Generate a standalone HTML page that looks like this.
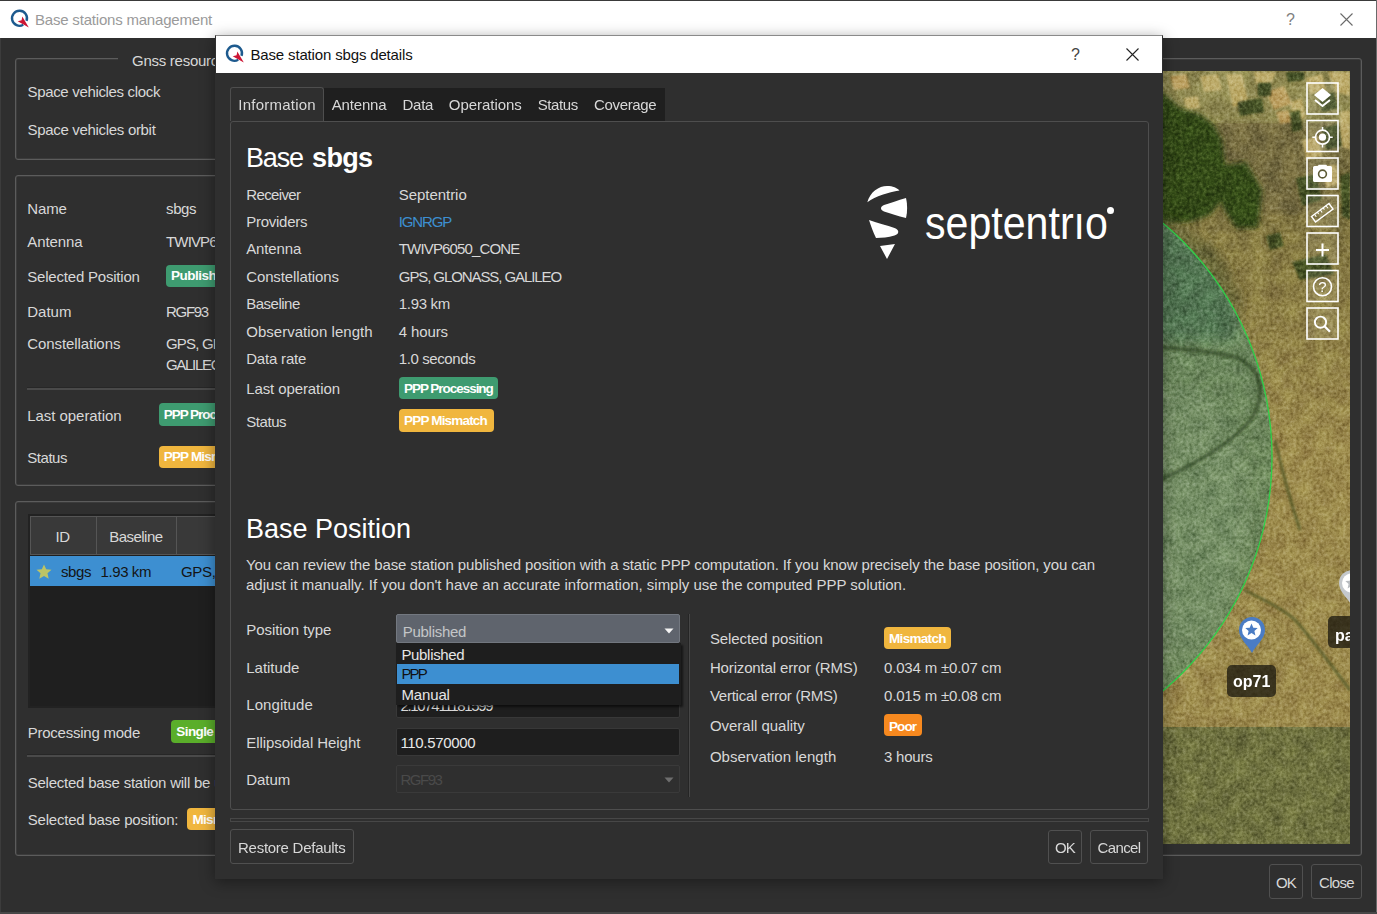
<!DOCTYPE html><html><head><meta charset="utf-8"><style>
*{box-sizing:border-box;margin:0;padding:0}
html,body{width:1377px;height:914px;overflow:hidden;background:#2f2f2f;font-family:"Liberation Sans",sans-serif;font-size:15px;color:#d8d8d8}
.a{position:absolute}
.t{position:absolute;white-space:nowrap}
.bd{position:absolute;border-radius:4px}
.gb{position:absolute;border:1px solid #5c5c5c;border-radius:3px;box-shadow:inset 0 0 0 0.5px rgba(90,90,90,0.6)}
.btn{position:absolute;border:1px solid #505050;border-radius:3px;background:#2f2f2f}
</style></head><body><div class="a" style="left:0px;top:0px;width:1377px;height:1px;background:#3a3a3a"></div><div class="a" style="left:0px;top:1px;width:1376px;height:37px;background:#fff"></div><div class="a" style="left:1376px;top:0px;width:1px;height:914px;background:#6a6a6a"></div><div class="a" style="left:0px;top:38px;width:1px;height:876px;background:#3c3c3c"></div><div class="a" style="left:0px;top:912px;width:1377px;height:2px;background:#474747"></div><svg class="a" style="left:10px;top:9px" width="22" height="22" viewBox="0 0 22 22"><path d="M13.25,15.8 A7.5,7.5 0 1 1 16.55,11.87" fill="none" stroke="#1d5a8e" stroke-width="2.4"/><path d="M18.8,18.6 L7.7,12.3 L11.6,11.3 L12.3,7.5 Z" fill="#cc1533"/></svg><div class="t" style="left:35px;top:12.3px;font-size:15px;line-height:15px;color:#9a9a9a;letter-spacing:-0.199px;">Base stations management</div><div class="t" style="left:1286px;top:11.5px;font-size:16px;line-height:16px;color:#808080;letter-spacing:-0.312px;">?</div><svg class="a" style="left:1340px;top:13px" width="13" height="13" viewBox="0 0 13 13"><path d="M0.5,0.5 L12.5,12.5 M12.5,0.5 L0.5,12.5" stroke="#6a6a6a" stroke-width="1.1"/></svg><div class="gb" style="left:15px;top:58px;width:400px;height:102px"></div><div class="a" style="left:118px;top:52px;width:280px;height:12px;background:#2f2f2f"></div><div class="t" style="left:132px;top:53.3px;font-size:15px;line-height:15px;letter-spacing:-0.263px;">Gnss resources</div><div class="t" style="left:27.5px;top:84.3px;font-size:15px;line-height:15px;letter-spacing:-0.332px;">Space vehicles clock</div><div class="t" style="left:27.5px;top:121.8px;font-size:15px;line-height:15px;letter-spacing:-0.312px;">Space vehicles orbit</div><div class="gb" style="left:15px;top:175px;width:400px;height:311px"></div><div class="t" style="left:27.3px;top:201.1px;font-size:15px;line-height:15px;letter-spacing:-0.154px;">Name</div><div class="t" style="left:166px;top:201.1px;font-size:15px;line-height:15px;letter-spacing:-0.372px;">sbgs</div><div class="t" style="left:27.3px;top:234.4px;font-size:15px;line-height:15px;letter-spacing:-0.099px;">Antenna</div><div class="t" style="left:166px;top:234.4px;font-size:15px;line-height:15px;letter-spacing:-0.846px;">TWIVP6050_CONE</div><div class="t" style="left:27.3px;top:269.3px;font-size:15px;line-height:15px;letter-spacing:-0.206px;">Selected Position</div><div class="bd" style="left:166px;top:264.6px;width:70px;height:22.2px;background:#3e9b70"></div><div class="t" style="left:171px;top:269.1px;font-size:13.5px;line-height:13.5px;color:#fff;font-weight:bold;letter-spacing:-0.502px;">Published</div><div class="t" style="left:27.3px;top:304.3px;font-size:15px;line-height:15px;letter-spacing:-0.017px;">Datum</div><div class="t" style="left:166px;top:304.3px;font-size:15px;line-height:15px;letter-spacing:-1.292px;">RGF93</div><div class="t" style="left:27.3px;top:336.0px;font-size:15px;line-height:15px;letter-spacing:-0.087px;">Constellations</div><div class="t" style="left:166px;top:336.0px;font-size:15px;line-height:15px;letter-spacing:-0.825px;">GPS, GLONASS,</div><div class="t" style="left:166px;top:356.7px;font-size:15px;line-height:15px;letter-spacing:-1.315px;">GALILEO</div><div class="a" style="left:27px;top:386.5px;width:390px;height:1px;background:#272727"></div><div class="a" style="left:27px;top:387.5px;width:390px;height:2px;background:#4a4a4a"></div><div class="t" style="left:27.3px;top:407.5px;font-size:15px;line-height:15px;letter-spacing:-0.056px;">Last operation</div><div class="bd" style="left:158.7px;top:403.3px;width:99px;height:22.3px;background:#3e9b70"></div><div class="t" style="left:163.7px;top:407.9px;font-size:13.5px;line-height:13.5px;color:#fff;font-weight:bold;letter-spacing:-1.022px;">PPP Processing</div><div class="t" style="left:27.3px;top:450.3px;font-size:15px;line-height:15px;letter-spacing:-0.472px;">Status</div><div class="bd" style="left:158.7px;top:445.6px;width:95px;height:22.5px;background:#f0b63e"></div><div class="t" style="left:163.7px;top:450.3px;font-size:13.5px;line-height:13.5px;color:#fff;font-weight:bold;letter-spacing:-0.816px;">PPP Mismatch</div><div class="gb" style="left:15px;top:501px;width:400px;height:355px"></div><div class="a" style="left:27.5px;top:513.5px;width:392px;height:194px;background:#1f1f1f;border:2px solid #222"></div><div class="a" style="left:29.5px;top:515.5px;width:388px;height:39.5px;background:#393939;border:1px solid #555"></div><div class="a" style="left:95.5px;top:516.3px;width:1px;height:38.5px;background:#555"></div><div class="a" style="left:176.3px;top:516.3px;width:1px;height:38.5px;background:#555"></div><div class="t" style="left:55.6px;top:529.4px;font-size:15px;line-height:15px;letter-spacing:-0.400px;">ID</div><div class="t" style="left:109.3px;top:529.4px;font-size:15px;line-height:15px;letter-spacing:-0.543px;">Baseline</div><div class="a" style="left:29.5px;top:556px;width:388px;height:30px;background:#3d8fd1"></div><svg class="a" style="left:35.5px;top:563.5px" width="16" height="16" viewBox="0 0 16 16"><path d="M8,0.5 L10.2,5.3 L15.5,5.8 L11.5,9.3 L12.7,14.8 L8,12 L3.3,14.8 L4.5,9.3 L0.5,5.8 L5.8,5.3 Z" fill="#bcc466"/></svg><div class="t" style="left:61px;top:563.9px;font-size:15px;line-height:15px;color:#141414;letter-spacing:-0.422px;">sbgs</div><div class="t" style="left:100.5px;top:563.9px;font-size:15px;line-height:15px;color:#141414;letter-spacing:-0.408px;">1.93 km</div><div class="t" style="left:181px;top:563.9px;font-size:15px;line-height:15px;color:#141414;letter-spacing:-0.328px;">GPS, GLONASS</div><div class="t" style="left:27.7px;top:724.8px;font-size:15px;line-height:15px;letter-spacing:-0.240px;">Processing mode</div><div class="bd" style="left:171.3px;top:719.5px;width:60px;height:23.8px;background:#5aae2a"></div><div class="t" style="left:176.3px;top:724.8px;font-size:13.5px;line-height:13.5px;color:#fff;font-weight:bold;letter-spacing:-0.586px;">Single</div><div class="a" style="left:27px;top:754px;width:390px;height:1px;background:#272727"></div><div class="a" style="left:27px;top:755px;width:390px;height:2px;background:#4a4a4a"></div><div class="t" style="left:27.7px;top:774.7px;font-size:15px;line-height:15px;letter-spacing:-0.233px;">Selected base station will be used</div><div class="t" style="left:27.7px;top:812.2px;font-size:15px;line-height:15px;letter-spacing:-0.196px;">Selected base position:</div><div class="bd" style="left:187.4px;top:808.4px;width:66px;height:21.9px;background:#f0b63e"></div><div class="t" style="left:192.4px;top:812.8px;font-size:13.5px;line-height:13.5px;color:#fff;font-weight:bold;letter-spacing:-0.660px;">Mismatch</div><div class="gb" style="left:1000px;top:58px;width:362px;height:798px"></div><svg class="a" style="left:1000px;top:71px;isolation:isolate" width="350" height="773" viewBox="1000 71 350 773"><defs><filter id="b6" x="-50%" y="-50%" width="200%" height="200%"><feGaussianBlur stdDeviation="6"/></filter><filter id="b3" x="-50%" y="-50%" width="200%" height="200%"><feGaussianBlur stdDeviation="2.5"/></filter><filter id="b1" x="-50%" y="-50%" width="200%" height="200%"><feGaussianBlur stdDeviation="0.9"/></filter><filter id="tx" x="0" y="0" width="1" height="1" color-interpolation-filters="sRGB"><feTurbulence type="fractalNoise" baseFrequency="0.3" numOctaves="4" seed="4"/><feColorMatrix type="matrix" values="1.3 0 0 0 -0.15  1.3 0 0 0 -0.15  1.3 0 0 0 -0.15  0 0 0 0 1"/></filter><filter id="tx2" x="0" y="0" width="1" height="1" color-interpolation-filters="sRGB"><feTurbulence type="fractalNoise" baseFrequency="0.06" numOctaves="2" seed="9"/><feColorMatrix type="matrix" values="1.5 0 0 0 -0.25  1.5 0 0 0 -0.25  1.5 0 0 0 -0.25  0 0 0 0 1"/></filter><linearGradient id="gv" x1="0" y1="0" x2="0" y2="1"><stop offset="0" stop-color="#8c8650"/><stop offset="0.12" stop-color="#807846"/><stop offset="0.25" stop-color="#766c3e"/><stop offset="0.45" stop-color="#867a42"/><stop offset="1" stop-color="#9c8a4c"/></linearGradient></defs><rect x="1000" y="71" width="350" height="380" fill="url(#gv)"/><rect x="1000" y="440" width="350" height="287" fill="#9c8a4c"/><rect x="1000" y="727" width="350" height="117" fill="#6f723f"/><rect x="1000" y="71" width="350" height="52" fill="#8e8850"/><rect x="1222" y="122" width="80" height="90" fill="#766c40" filter="url(#b3)"/><g filter="url(#b1)" fill="#ccb874" opacity="0.8"><path d="M1226,74 L1242,74 L1248,100 L1233,108 Z"/><path d="M1254,72 L1276,72 L1272,82 L1256,84 Z"/><path d="M1290,102 L1302,98 L1306,118 L1294,121 Z"/><path d="M1328,72 L1350,72 L1350,96 L1336,92 Z"/><path d="M1340,112 L1350,110 L1350,150 L1340,146 Z"/><path d="M1302,140 L1318,136 L1322,156 L1306,160 Z"/><path d="M1184,98 L1198,96 L1200,108 L1186,110 Z"/><path d="M1200,76 L1218,74 L1222,90 L1204,92 Z"/><path d="M1306,78 L1322,74 L1326,90 L1310,94 Z"/><path d="M1322,168 L1336,164 L1340,184 L1326,188 Z"/></g><g filter="url(#b1)" fill="#bca060"><path d="M1266,92 L1284,86 L1292,104 L1274,110 Z"/><path d="M1276,112 L1288,110 L1294,122 L1280,124 Z"/><path d="M1170,76 L1186,74 L1190,88 L1174,90 Z"/></g><g filter="url(#b1)" fill="#e2dab6" opacity="0.9"><path d="M1182,157 L1198,156 L1199,163 L1184,164 Z"/></g><g filter="url(#b3)" fill="#304816"><path d="M1000,92 L1162,92 L1180,108 L1200,114 L1214,125 L1222,140 L1226,170 L1222,200 L1210,215 L1190,222 L1166,224 L1000,240 Z"/><path d="M1220,166 L1246,162 L1262,190 L1258,228 L1236,228 L1222,206 Z"/></g><g filter="url(#b1)" fill="#36461a" opacity="0.8"><path d="M1258,83 L1271,83 L1271,96 L1258,96 Z"/><path d="M1238,102 L1262,98 L1264,112 L1240,116 Z"/><path d="M1290,112 L1300,110 L1302,130 L1292,132 Z"/><path d="M1318,96 L1334,92 L1338,108 L1322,112 Z"/><path d="M1286,72 L1304,72 L1304,80 L1288,82 Z"/><path d="M1322,128 L1338,124 L1342,146 L1326,150 Z"/><path d="M1296,178 L1316,174 L1322,200 L1302,206 Z"/><path d="M1340,176 L1350,172 L1350,220 L1342,216 Z"/><path d="M1292,262 L1326,254 L1334,274 L1300,280 Z"/><path d="M1266,236 L1280,232 L1284,246 L1270,250 Z"/></g><g filter="url(#b6)"><path d="M1000,230 L1170,222 L1215,250 L1240,300 L1235,340 L1000,345 Z" fill="#5e6034" opacity="0.8"/><path d="M1000,400 L1200,390 L1240,430 L1250,520 L1220,640 L1000,700 Z" fill="#b4a070" opacity="0.35"/></g><g filter="url(#b3)"><path d="M1000,780 L1040,770 L1050,800 L1010,810 Z" fill="#a8a070" opacity="0.5"/></g><circle cx="967" cy="457" r="305" fill="#3a8a74" fill-opacity="0.45"/><rect x="1000" y="71" width="350" height="773" filter="url(#tx2)" style="mix-blend-mode:overlay" opacity="0.15"/><rect x="1000" y="71" width="350" height="773" filter="url(#tx)" style="mix-blend-mode:soft-light" opacity="0.55"/><g fill="none" stroke="#4a5224" stroke-width="3" opacity="0.7" filter="url(#b1)"><path d="M1244,590 C1265,600 1285,610 1295,620 C1305,630 1320,650 1350,690"/><path d="M1275,440 C1282,470 1290,500 1300,530"/><path d="M1000,342 C1100,344 1200,346 1238,358 C1262,370 1266,394 1252,418 C1232,444 1195,464 1160,480 L1000,560" stroke="#2a3e1c" stroke-width="4" opacity="0.85"/></g><circle cx="967" cy="457" r="305" fill="none" stroke="#2fd04a" stroke-width="1.3"/><rect x="1307" y="83" width="31" height="31" fill="rgba(255,255,255,0.08)" stroke="#fff" stroke-width="1.6"/><rect x="1307" y="120.5" width="31" height="31" fill="rgba(255,255,255,0.08)" stroke="#fff" stroke-width="1.6"/><rect x="1307" y="158" width="31" height="31" fill="rgba(255,255,255,0.08)" stroke="#fff" stroke-width="1.6"/><rect x="1307" y="195.5" width="31" height="31" fill="rgba(255,255,255,0.08)" stroke="#fff" stroke-width="1.6"/><rect x="1307" y="233" width="31" height="31" fill="rgba(255,255,255,0.08)" stroke="#fff" stroke-width="1.6"/><rect x="1307" y="270.5" width="31" height="31" fill="rgba(255,255,255,0.08)" stroke="#fff" stroke-width="1.6"/><rect x="1307" y="308" width="31" height="31" fill="rgba(255,255,255,0.08)" stroke="#fff" stroke-width="1.6"/></svg><svg class="a" style="left:1300px;top:75px" width="50" height="280" viewBox="1300 75 50 280"><g fill="#fff" stroke="#fff"><path d="M1322.5,88 L1331,95 L1322.5,102 L1314,95 Z" stroke="none"/><path d="M1315,100 L1322.5,106 L1330,100" fill="none" stroke-width="2"/><circle cx="1322.5" cy="137.2" r="7" fill="none" stroke-width="1.7"/><circle cx="1322.5" cy="137.2" r="3.6" stroke="none"/><path d="M1322.5,127 V130.5 M1322.5,144 V147.5 M1312.3,137.2 H1315.8 M1329.2,137.2 H1332.7" stroke-width="1.6"/><path d="M1313,167.5 Q1313,166 1314.5,166 H1317.5 L1319,164.8 H1326 L1327.5,166 H1330.5 Q1332,166 1332,167.5 V180.5 Q1332,182 1330.5,182 H1314.5 Q1313,182 1313,180.5 Z" stroke="none"/><circle cx="1322.5" cy="174" r="3.9" fill="none" stroke="#5c5a36" stroke-width="1.6"/><path d="M1311.5,216.5 L1329,203.5 L1333,209 L1315.5,222 Z" fill="none" stroke-width="1.5"/><path d="M1314.5,214.3 L1316.3,216.8 M1317.4,212.2 L1318.6,213.9 M1320.3,210 L1322.1,212.5 M1323.2,207.9 L1324.4,209.6 M1326.1,205.7 L1327.9,208.2" stroke-width="1.1"/><path d="M1322.5,243.5 V256.5 M1316,250 H1329" stroke-width="2"/><circle cx="1322.5" cy="286.8" r="9" fill="none" stroke-width="1.6"/><text x="1322.5" y="292.3" font-size="15" text-anchor="middle" stroke="none" font-family="Liberation Sans">?</text><circle cx="1320.5" cy="322.2" r="5.6" fill="none" stroke-width="1.9"/><path d="M1324.5,326.2 L1330,331.7" stroke-width="2.3"/></g></svg><svg class="a" style="left:1236px;top:614px" width="32" height="42" viewBox="0 0 32 42"><path d="M16,39 C12,31 3,25 3,16 A13,13 0 0 1 29,16 C29,25 20,31 16,39 Z" fill="#4a7cc4"/><circle cx="15.5" cy="16" r="9.5" fill="#fff"/><path d="M15.5,9.5 L17.3,13.7 L21.7,14 L18.4,17 L19.4,21.5 L15.5,19 L11.6,21.5 L12.6,17 L9.3,14 L13.7,13.7 Z" fill="#4a7cc4"/></svg><div class="a" style="left:1227px;top:665px;width:49px;height:32px;background:rgba(24,22,14,0.74);border-radius:5px"></div><div class="t" style="left:1233px;top:674px;font-size:16px;line-height:16px;font-weight:bold;color:#fff">op71</div><div class="a" style="left:1000px;top:560px;width:350px;height:100px;overflow:hidden"><svg class="a" style="left:336px;top:7px" width="32" height="42" viewBox="0 0 32 42"><path d="M16,39 C12,31 3,25 3,16 A13,13 0 0 1 29,16 C29,25 20,31 16,39 Z" fill="#c4c8cc"/><circle cx="15.5" cy="16" r="9.5" fill="#fff"/><path d="M15.5,9.5 L17.3,13.7 L21.7,14 L18.4,17 L19.4,21.5 L15.5,19 L11.6,21.5 L12.6,17 L9.3,14 L13.7,13.7 Z" fill="#b8bcc0"/></svg><div class="a" style="left:328px;top:56px;width:40px;height:32px;background:rgba(24,22,14,0.74);border-radius:5px"></div><div class="t" style="left:335px;top:68px;font-size:16px;line-height:16px;font-weight:bold;color:#fff">pa</div></div><div class="btn" style="left:1268.5px;top:864.3px;width:34.5px;height:34.5px"></div><div class="t" style="left:1276px;top:875.3px;font-size:15px;line-height:15px;letter-spacing:-0.844px;">OK</div><div class="btn" style="left:1311px;top:864.3px;width:51px;height:34.5px"></div><div class="t" style="left:1319px;top:875.3px;font-size:15px;line-height:15px;letter-spacing:-0.672px;">Close</div><div class="a" style="left:215px;top:35px;width:948px;height:844px;background:#2f2f2f;border:1px solid #2f2f2f;border-top-color:#8a8a8a;box-shadow:0 3px 14px rgba(0,0,0,0.4)"></div><div class="a" style="left:216px;top:36px;width:946px;height:37px;background:#fff"></div><svg class="a" style="left:225px;top:44.2px" width="22" height="22" viewBox="0 0 22 22"><path d="M13.25,15.8 A7.5,7.5 0 1 1 16.55,11.87" fill="none" stroke="#1d5a8e" stroke-width="2.4"/><path d="M18.8,18.6 L7.7,12.3 L11.6,11.3 L12.3,7.5 Z" fill="#cc1533"/></svg><div class="t" style="left:250.5px;top:47.3px;font-size:15px;line-height:15px;color:#111;letter-spacing:-0.158px;">Base station sbgs details</div><div class="t" style="left:1071px;top:46.5px;font-size:16px;line-height:16px;color:#444;letter-spacing:-0.312px;">?</div><svg class="a" style="left:1126px;top:48px" width="13" height="13" viewBox="0 0 13 13"><path d="M0.5,0.5 L12.5,12.5 M12.5,0.5 L0.5,12.5" stroke="#222" stroke-width="1.1"/></svg><div class="a" style="left:323px;top:88px;width:342px;height:33px;background:#1f1f1f"></div><div class="a" style="left:230px;top:87px;width:93.5px;height:34px;background:#2f2f2f;border:1px solid #4e4e4e;border-bottom:none;border-radius:3px 3px 0 0"></div><div class="t" style="left:238.3px;top:97.2px;font-size:15px;line-height:15px;letter-spacing:0.232px;">Information</div><div class="t" style="left:331.7px;top:97.2px;font-size:15px;line-height:15px;letter-spacing:-0.156px;">Antenna</div><div class="t" style="left:402.5px;top:97.2px;font-size:15px;line-height:15px;letter-spacing:-0.272px;">Data</div><div class="t" style="left:448.8px;top:97.2px;font-size:15px;line-height:15px;letter-spacing:-0.037px;">Operations</div><div class="t" style="left:537.8px;top:97.2px;font-size:15px;line-height:15px;letter-spacing:-0.439px;">Status</div><div class="t" style="left:594px;top:97.2px;font-size:15px;line-height:15px;letter-spacing:-0.343px;">Coverage</div><div class="a" style="left:230px;top:121px;width:919px;height:689px;border:1px solid #4e4e4e;border-radius:3px;background:#2f2f2f"></div><div class="t" style="left:246px;top:145.1px;font-size:27px;line-height:27px;color:#fff;letter-spacing:-1.137px;">Base</div><div class="t" style="left:312px;top:145.1px;font-size:27px;line-height:27px;color:#fff;font-weight:bold;letter-spacing:-0.633px;">sbgs</div><div class="t" style="left:246.2px;top:186.6px;font-size:15px;line-height:15px;letter-spacing:-0.611px;">Receiver</div><div class="t" style="left:398.8px;top:186.6px;font-size:15px;line-height:15px;letter-spacing:-0.049px;">Septentrio</div><div class="t" style="left:246.2px;top:214.2px;font-size:15px;line-height:15px;letter-spacing:-0.262px;">Providers</div><div class="t" style="left:246.2px;top:241.3px;font-size:15px;line-height:15px;letter-spacing:-0.127px;">Antenna</div><div class="t" style="left:398.8px;top:241.3px;font-size:15px;line-height:15px;letter-spacing:-0.846px;">TWIVP6050_CONE</div><div class="t" style="left:246.2px;top:269.0px;font-size:15px;line-height:15px;letter-spacing:-0.116px;">Constellations</div><div class="t" style="left:398.8px;top:269.0px;font-size:15px;line-height:15px;letter-spacing:-1.089px;">GPS, GLONASS, GALILEO</div><div class="t" style="left:246.2px;top:296.2px;font-size:15px;line-height:15px;letter-spacing:-0.493px;">Baseline</div><div class="t" style="left:398.8px;top:296.2px;font-size:15px;line-height:15px;letter-spacing:-0.323px;">1.93 km</div><div class="t" style="left:246.2px;top:324.1px;font-size:15px;line-height:15px;letter-spacing:0.027px;">Observation length</div><div class="t" style="left:398.8px;top:324.1px;font-size:15px;line-height:15px;letter-spacing:-0.135px;">4 hours</div><div class="t" style="left:246.2px;top:351.3px;font-size:15px;line-height:15px;letter-spacing:-0.189px;">Data rate</div><div class="t" style="left:398.8px;top:351.3px;font-size:15px;line-height:15px;letter-spacing:-0.399px;">1.0 seconds</div><div class="t" style="left:246.2px;top:381.3px;font-size:15px;line-height:15px;letter-spacing:-0.098px;">Last operation</div><div class="t" style="left:246.2px;top:414.1px;font-size:15px;line-height:15px;letter-spacing:-0.422px;">Status</div><div class="t" style="left:398.8px;top:214.2px;font-size:15px;line-height:15px;color:#3d8fd1;letter-spacing:-1.148px;">IGNRGP</div><div class="bd" style="left:399px;top:376.8px;width:99.3px;height:22.4px;background:#3e9b70"></div><div class="t" style="left:404px;top:381.7px;font-size:13.5px;line-height:13.5px;color:#fff;font-weight:bold;letter-spacing:-1.037px;">PPP Processing</div><div class="bd" style="left:399px;top:409px;width:94.5px;height:22.7px;background:#f0b63e"></div><div class="t" style="left:404px;top:414.4px;font-size:13.5px;line-height:13.5px;color:#fff;font-weight:bold;letter-spacing:-0.816px;">PPP Mismatch</div><svg class="a" style="left:860px;top:180px" width="60" height="85" viewBox="0 0 60 85"><g fill="#fff"><path d="M7.3,22.3 C10,12 19,6 27,6 C33,6 37,8 39.5,10.5 C28,12.5 16,16 7.3,22.3 Z"/><path d="M46,18 C47.5,24 47.5,32 46,38 C38,36 30,33.5 24,31.5 C20,30 20,26.5 24,25 C30,23 38,20.5 46,18 Z"/><path d="M9,40 C18,43 27,45.5 34.5,48 C39.5,49.8 39.5,54 34.5,55.5 C28,57.3 22,58 16,58 C13,52 11,46 9,40 Z"/><path d="M20,66 L35,64 L27,79 Z"/></g></svg><div class="t" style="left:925px;top:199.2px;font-size:47px;line-height:47px;color:#fff;transform:scaleX(0.875);transform-origin:0 0">septentrıo</div><div class="a" style="left:1107px;top:207px;width:7px;height:7px;border-radius:50%;background:#fff"></div><div class="t" style="left:246px;top:515.8px;font-size:27px;line-height:27px;color:#fff;letter-spacing:-0.008px;">Base Position</div><div class="t" style="left:246px;top:556.7px;font-size:15px;line-height:15px;letter-spacing:-0.114px;">You can review the base station published position with a static PPP computation. If you know precisely the base position, you can</div><div class="t" style="left:246px;top:576.7px;font-size:15px;line-height:15px;letter-spacing:-0.018px;">adjust it manually. If you don't have an accurate information, simply use the computed PPP solution.</div><div class="t" style="left:246.3px;top:621.8px;font-size:15px;line-height:15px;letter-spacing:-0.076px;">Position type</div><div class="t" style="left:246.3px;top:660.3px;font-size:15px;line-height:15px;letter-spacing:-0.036px;">Latitude</div><div class="t" style="left:246.3px;top:697.0px;font-size:15px;line-height:15px;letter-spacing:0.066px;">Longitude</div><div class="t" style="left:246.3px;top:735.1px;font-size:15px;line-height:15px;letter-spacing:-0.060px;">Ellipsoidal Height</div><div class="t" style="left:246.3px;top:772.2px;font-size:15px;line-height:15px;letter-spacing:-0.078px;">Datum</div><div class="a" style="left:396px;top:689px;width:284px;height:29px;background:#1e1e1e;border:1px solid #383838;border-radius:2px"></div><div class="t" style="left:400.4px;top:698.3px;font-size:15px;line-height:15px;color:#d8d8d8;letter-spacing:-1.314px;">2.107411181599</div><div class="a" style="left:396px;top:727.7px;width:284px;height:28.2px;background:#1e1e1e;border:1px solid #383838;border-radius:2px"></div><div class="t" style="left:400.4px;top:735.1px;font-size:15px;line-height:15px;color:#e8e8e8;letter-spacing:-0.314px;">110.570000</div><div class="a" style="left:396px;top:764.5px;width:284px;height:28.7px;border:1px solid #3a3a3a;border-radius:2px"></div><div class="t" style="left:400.4px;top:772.2px;font-size:15px;line-height:15px;color:#4a4a4a;letter-spacing:-1.472px;">RGF93</div><svg class="a" style="left:664px;top:776.5px" width="10" height="6" viewBox="0 0 10 6"><path d="M0.5,0.5 L9.5,0.5 L5,5.5 Z" fill="#6e6e6e"/></svg><div class="a" style="left:396px;top:614.1px;width:284px;height:29px;background:#5f646d;border:1px solid #737880;border-radius:2px"></div><div class="t" style="left:402.7px;top:623.5px;font-size:15px;line-height:15px;color:#c4c6c8;letter-spacing:-0.266px;">Published</div><svg class="a" style="left:664px;top:628px" width="10" height="6" viewBox="0 0 10 6"><path d="M0.5,0.5 L9.5,0.5 L5,5.5 Z" fill="#f4f4f4"/></svg><div class="a" style="left:396px;top:642.9px;width:284.5px;height:62.5px;background:#1e1e1e;box-shadow:1.5px 1.5px 2px rgba(0,0,0,0.55)"></div><div class="t" style="left:401.4px;top:646.8px;font-size:15px;line-height:15px;color:#e6e6e6;letter-spacing:-0.321px;">Published</div><div class="a" style="left:397px;top:663.6px;width:282px;height:20px;background:#3d8fd1"></div><div class="t" style="left:401.4px;top:666.3px;font-size:15px;line-height:15px;color:#111;letter-spacing:-1.805px;">PPP</div><div class="t" style="left:401.4px;top:686.9px;font-size:15px;line-height:15px;color:#e6e6e6;letter-spacing:-0.134px;">Manual</div><div class="a" style="left:687.5px;top:614px;width:1px;height:183px;background:#252525"></div><div class="a" style="left:688.5px;top:614px;width:1.5px;height:183px;background:#474747"></div><div class="t" style="left:709.9px;top:630.8px;font-size:15px;line-height:15px;letter-spacing:-0.085px;">Selected position</div><div class="t" style="left:709.9px;top:660.3px;font-size:15px;line-height:15px;letter-spacing:-0.144px;">Horizontal error (RMS)</div><div class="t" style="left:884px;top:660.3px;font-size:15px;line-height:15px;letter-spacing:-0.167px;">0.034 m ±0.07 cm</div><div class="t" style="left:709.9px;top:688.3px;font-size:15px;line-height:15px;letter-spacing:-0.242px;">Vertical error (RMS)</div><div class="t" style="left:884px;top:688.3px;font-size:15px;line-height:15px;letter-spacing:-0.167px;">0.015 m ±0.08 cm</div><div class="t" style="left:709.9px;top:718.4px;font-size:15px;line-height:15px;letter-spacing:-0.016px;">Overall quality</div><div class="t" style="left:709.9px;top:748.5px;font-size:15px;line-height:15px;letter-spacing:0.027px;">Observation length</div><div class="t" style="left:884px;top:748.5px;font-size:15px;line-height:15px;letter-spacing:-0.207px;">3 hours</div><div class="bd" style="left:884px;top:626.9px;width:66.9px;height:22.2px;background:#f0b63e"></div><div class="t" style="left:889px;top:631.6px;font-size:13.5px;line-height:13.5px;color:#fff;font-weight:bold;letter-spacing:-0.685px;">Mismatch</div><div class="bd" style="left:884px;top:714.3px;width:38.2px;height:22.2px;background:#f7891f"></div><div class="t" style="left:889px;top:719.7px;font-size:13.5px;line-height:13.5px;color:#fff;font-weight:bold;letter-spacing:-0.891px;">Poor</div><div class="a" style="left:230px;top:818.3px;width:919px;height:3.6px;border:1px solid #474747"></div><div class="btn" style="left:230px;top:829.3px;width:123.5px;height:34.5px"></div><div class="t" style="left:238px;top:840.1px;font-size:15px;line-height:15px;letter-spacing:-0.264px;">Restore Defaults</div><div class="btn" style="left:1047.5px;top:829.5px;width:34.5px;height:34.3px"></div><div class="t" style="left:1055px;top:840.3px;font-size:15px;line-height:15px;letter-spacing:-0.844px;">OK</div><div class="btn" style="left:1090.2px;top:829.5px;width:58px;height:34.3px"></div><div class="t" style="left:1097.5px;top:840.3px;font-size:15px;line-height:15px;letter-spacing:-0.617px;">Cancel</div></body></html>
